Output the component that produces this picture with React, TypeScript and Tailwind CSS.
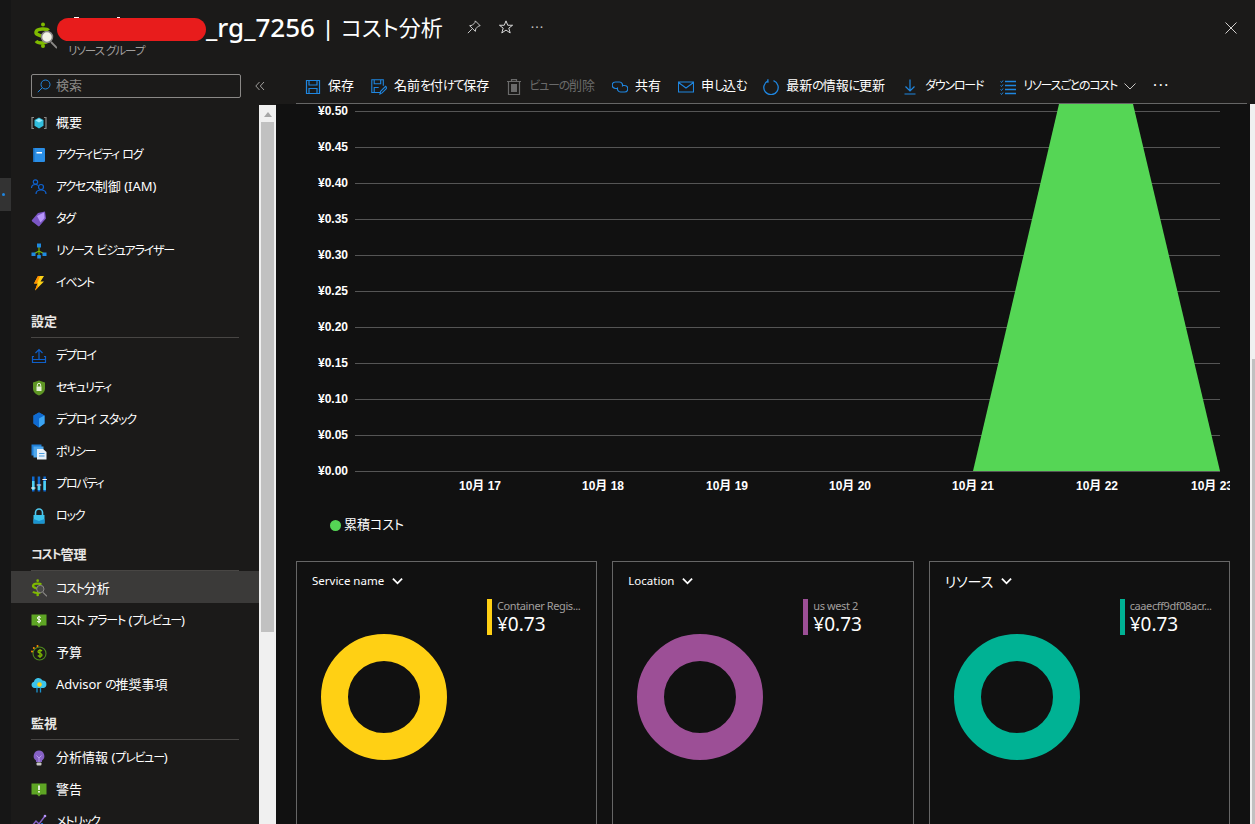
import React from 'react';

type IconProps = { className?: string; lens?: string };

function Jp({ text }: { text: string }) {
  return (
    <>
      {text.split(/([\u3040-\u30ff]+)/).map((part, i) =>
        i % 2 === 1 ? (
          <span key={i} className="text-[12px] tracking-[-1.2px]">{part}</span>
        ) : (
          <span key={i}>{part}</span>
        ),
      )}
    </>
  );
}

// --- side menu icons ---
const CostIcon = ({ className, lens = '#f2f2e6' }: IconProps) => (
  <svg viewBox="0 0 24 30" className={className}>
    <circle cx="10" cy="2.5" r="2" fill="#7fba00" />
    <circle cx="10" cy="24" r="2" fill="#7fba00" />
    <path d="M15.5 8.5C14 6.5 4 6 3 10c-1 4.500 12 3.500 11.500 8C14 22 5 21.500 3 19" fill="none" stroke="#7fba00" strokeWidth="3.400" />
    <path d="M18 20l6 6" stroke="#8a8886" strokeWidth="1.800" />
    <circle cx="14" cy="15" r="5.500" fill={lens} stroke="#8a8886" strokeWidth="1.500" />
  </svg>
);

const icons: Record<string, React.ReactNode> = {
  overview: (
    <svg viewBox="0 0 16 16" className="w-4 h-4">
      <path d="M3 2.500H1v11h2M13 2.500h2v11h-2" fill="none" stroke="#8a8886" strokeWidth="1.200" />
      <path d="M8 2.500l4.500 2.600v5.600L8 13.500l-4.500-2.800V5.100z" fill="#32bedd" />
      <path d="M8 3.500l3.500 2L8 7.500l-3.500-2z" fill="#9cebff" />
    </svg>
  ),
  log: (
    <svg viewBox="0 0 16 16" className="w-4 h-4">
      <rect x="2" y="1" width="12" height="14" rx="1" fill="#2a8ee6" />
      <rect x="2" y="1" width="1.500" height="14" fill="#1b6fbd" />
      <rect x="5.500" y="5" width="5.500" height="1.500" fill="#fff" />
    </svg>
  ),
  iam: (
    <svg viewBox="0 0 16 16" className="w-4 h-4" fill="none" stroke="#0f62d0" strokeWidth="1.200">
      <circle cx="4.500" cy="3" r="2.200" />
      <path d="M.5 9c0-2.500 1.500-3.500 4-3.500 1 0 2 .3 2.500 1" />
      <circle cx="10" cy="8" r="2.500" />
      <path d="M5 15c0-2.500 2-4 5-4s5 1.500 5 4" />
    </svg>
  ),
  tag: (
    <svg viewBox="0 0 16 16" className="w-4 h-4">
      <path d="M1 9l6-7 7-1.500 1 7-6.500 7.500a1 1 0 0 1-1.500 0L1.200 10.500A1 1 0 0 1 1 9z" fill="#7b56c4" />
      <path d="M6 5l7-3.500.5 5.500-4 4.500z" fill="#b796f9" />
    </svg>
  ),
  visualizer: (
    <svg viewBox="0 0 16 16" className="w-4 h-4">
      <path d="M8 3v10M8 8L2.500 11M8 8l5.500 3" stroke="#7fba00" strokeWidth="1.100" fill="none" />
      <rect x="6" y="0.500" width="4" height="4" fill="#1f8ae0" />
      <rect x="0.500" y="9.500" width="4" height="3.500" fill="#1f8ae0" />
      <rect x="11.500" y="9.500" width="4" height="3.500" fill="#1f8ae0" />
      <rect x="6.200" y="12" width="3.600" height="3.500" fill="#1f8ae0" />
    </svg>
  ),
  event: (
    <svg viewBox="0 0 16 16" className="w-4 h-4">
      <path d="M7 1h6L9.500 6.500H13L4 15.500l2.500-7H3z" fill="#fcd116" />
      <path d="M7 1h2L6 8.500H3zM6.500 8.500L4 15.500l3-3z" fill="#ff8c00" />
    </svg>
  ),
  deploy: (
    <svg viewBox="0 0 16 16" className="w-4 h-4" fill="none" stroke="#0f5fc9" strokeWidth="1.200">
      <path d="M8 11V1.500M4.500 5L8 1.500 11.500 5" />
      <path d="M3 8.500H1.500v6h13v-6H13M1.500 11.500h13" />
    </svg>
  ),
  security: (
    <svg viewBox="0 0 16 16" className="w-4 h-4">
      <path d="M8 .5l6 2v6c0 3.500-3 6-6 7-3-1-6-3.500-6-7v-6z" fill="#5e9624" />
      <rect x="5.500" y="6.500" width="5" height="4.500" fill="#e6f2d8" />
      <path d="M6.300 6.500V5a1.700 1.700 0 0 1 3.400 0v1.500" fill="none" stroke="#e6f2d8" />
    </svg>
  ),
  stack: (
    <svg viewBox="0 0 16 16" className="w-4 h-4">
      <path d="M8 .5l5.500 3v8L8 15.500l-5.500-4v-8z" fill="#1b7de0" />
      <path d="M8 .5l5.500 3L8 6.500v9l-5.500-4v-8z" fill="#0f6ad0" />
      <path d="M8 6.500l5.500-3v8L8 15.500z" fill="#3ba4f2" />
    </svg>
  ),
  policy: (
    <svg viewBox="0 0 16 16" className="w-4 h-4">
      <rect x="0.500" y="0.500" width="10" height="11" fill="#1f7fd8" />
      <rect x="2.500" y="2.500" width="10" height="11" fill="#50a8ec" />
      <path d="M6 5h6l3.500 3v7.500H6z" fill="#e8f1fa" />
      <path d="M8 9.500h5.500M8 12h5.500" stroke="#4a9de0" strokeWidth="1" />
    </svg>
  ),
  properties: (
    <svg viewBox="0 0 16 16" className="w-4 h-4">
      <rect x="1" y="0.500" width="2.500" height="15" fill="#0f6ad0" />
      <rect x="6.700" y="0.500" width="2.500" height="15" fill="#0f6ad0" />
      <rect x="12.400" y="0.500" width="2.500" height="15" fill="#0f6ad0" />
      <rect x="1" y="5" width="2.500" height="9" fill="#50d2f0" />
      <rect x="6.700" y="10" width="2.500" height="4" fill="#50d2f0" />
      <rect x="12.400" y="5" width="2.500" height="9" fill="#50d2f0" />
      <path d="M0 12h4.500M5.700 9h4.500M11.400 3.500h4.500" stroke="#fff" />
    </svg>
  ),
  lock: (
    <svg viewBox="0 0 16 16" className="w-4 h-4">
      <path d="M4.500 8V4.500a3.500 3.500 0 0 1 7 0V8" fill="none" stroke="#50c8ee" strokeWidth="1.600" />
      <rect x="2.500" y="7" width="11" height="8.500" fill="#3cc4ec" />
      <path d="M2.500 11l5.500 2 5.500-2v4.500h-11z" fill="#1b93d0" />
    </svg>
  ),
  cost: <CostIcon className="w-4 h-5" lens="#4a4a48" />,
  alert: (
    <svg viewBox="0 0 16 16" className="w-4 h-4">
      <path d="M0.500 1.500h15v11H10L8 14.500 6 12.500H0.500z" fill="#5ea524" />
      <path d="M9.800 4.500C9 3.500 6.500 3.500 6.300 5c-.2 1.500 3.500 1.200 3.400 3-.1 1.300-2.700 1.300-3.500.3M8 2.800v7.500" fill="none" stroke="#fff" strokeWidth="1" />
    </svg>
  ),
  budget: (
    <svg viewBox="0 0 16 16" className="w-4 h-4">
      <circle cx="8.500" cy="8.500" r="6.500" fill="none" stroke="#4f8a1f" strokeWidth="1.100" />
      <path d="M11 6C10 4.800 7 5 7 6.700c0 1.800 4 1.300 4 3.200 0 1.700-3 1.800-4.200.6M9 4v9" fill="none" stroke="#7fba00" strokeWidth="1.300" />
      <circle cx="6.500" cy="1" r="1" fill="#ff8c00" />
      <circle cx="2.800" cy="3" r="1" fill="#ff8c00" />
      <circle cx="1" cy="6.500" r="1" fill="#ff8c00" />
    </svg>
  ),
  advisor: (
    <svg viewBox="0 0 16 16" className="w-4 h-4">
      <path d="M3.500 11A3.200 3.200 0 0 1 3 4.700 4.500 4.500 0 0 1 11.500 3.500 3.800 3.800 0 0 1 12.500 11z" fill="#3cc4ec" />
      <path d="M6 10.500v5M9.500 10.500v5" stroke="#1b93d0" strokeWidth="1.300" />
      <circle cx="8.500" cy="7.500" r="2.300" fill="#fcd116" />
    </svg>
  ),
  insights: (
    <svg viewBox="0 0 16 16" className="w-4 h-4">
      <path d="M8 .5a5.500 5.500 0 0 1 3 10V12H5v-1.500A5.500 5.500 0 0 1 8 .5z" fill="#8661c5" />
      <path d="M5.500 5.500L8 8l2.500-2.500M8 8v4" fill="none" stroke="#c5a9f5" strokeWidth=".8" />
      <rect x="5.500" y="12.500" width="5" height="3" rx="1" fill="#c8c6c4" />
    </svg>
  ),
  warning: (
    <svg viewBox="0 0 16 16" className="w-4 h-4">
      <path d="M0.500 1.500h15v11H10L8 14.500 6 12.500H0.500z" fill="#5ea524" />
      <rect x="7.200" y="3.500" width="1.600" height="4.500" fill="#fff" />
      <rect x="7.200" y="9" width="1.600" height="1.600" fill="#fff" />
    </svg>
  ),
  metrics: (
    <svg viewBox="0 0 16 16" className="w-4 h-4">
      <path d="M1 12l4-5 3 3 6-8" fill="none" stroke="#8661c5" strokeWidth="1.500" />
      <circle cx="14" cy="2" r="1.300" fill="#b796f9" />
      <rect x="2" y="13" width="2" height="3" fill="#1f6fd0" />
      <rect x="6" y="11.500" width="2" height="4.500" fill="#1f6fd0" />
      <rect x="10" y="9" width="2" height="7" fill="#1f6fd0" />
    </svg>
  ),
};

type NavEntry = { icon: string; label: string; active?: boolean };
type NavGroup = { title?: string; items: NavEntry[] };

const navGroups: NavGroup[] = [
  {
    items: [
      { icon: 'overview', label: '概要' },
      { icon: 'log', label: 'アクティビティ ログ' },
      { icon: 'iam', label: 'アクセス制御 (IAM)' },
      { icon: 'tag', label: 'タグ' },
      { icon: 'visualizer', label: 'リソース ビジュアライザー' },
      { icon: 'event', label: 'イベント' },
    ],
  },
  {
    title: '設定',
    items: [
      { icon: 'deploy', label: 'デプロイ' },
      { icon: 'security', label: 'セキュリティ' },
      { icon: 'stack', label: 'デプロイ スタック' },
      { icon: 'policy', label: 'ポリシー' },
      { icon: 'properties', label: 'プロパティ' },
      { icon: 'lock', label: 'ロック' },
    ],
  },
  {
    title: 'コスト管理',
    items: [
      { icon: 'cost', label: 'コスト分析', active: true },
      { icon: 'alert', label: 'コスト アラート (プレビュー)' },
      { icon: 'budget', label: '予算' },
      { icon: 'advisor', label: 'Advisor の推奨事項' },
    ],
  },
  {
    title: '監視',
    items: [
      { icon: 'insights', label: '分析情報 (プレビュー)' },
      { icon: 'warning', label: '警告' },
      { icon: 'metrics', label: 'メトリック' },
    ],
  },
];

// --- toolbar ---
const toolbarBlue = '#1f86e0';

const toolIcons: Record<string, React.ReactNode> = {
  save: (
    <svg viewBox="0 0 16 16" className="w-4 h-4" fill="none" stroke={toolbarBlue} strokeWidth="1.200">
      <path d="M1.500 1.500h13v13h-13zM4 1.500v4.500h8V1.500M4 14.500V9.500h8v5" />
    </svg>
  ),
  saveAs: (
    <svg viewBox="0 0 16 16" className="w-4 h-4" fill="none" stroke={toolbarBlue} strokeWidth="1.100">
      <path d="M9 13.500H.8V.8h11.500v6M3.200.8v4h6.500v-4M3.200 13.500V8.500h4.500" />
      <path d="M9 15l.6-2.600 5-5 1.500 1.500-5 5z" />
    </svg>
  ),
  trash: (
    <svg viewBox="0 0 16 16" className="w-4 h-4" fill="none" stroke="#6a6a6a" strokeWidth="1.200">
      <path d="M1 2.500h14M5.500 2.500V.6h5v1.900M2.500 2.500v13h11v-13" />
      <rect x="5" y="5" width="6" height="8" fill="#6a6a6a" stroke="none" />
    </svg>
  ),
  share: (
    <svg viewBox="0 0 16 16" className="w-4 h-4" fill="none" stroke={toolbarBlue} strokeWidth="1.200">
      <path d="M6 9.500H3.500a3.200 3.200 0 0 1 0-6.500h4a3.200 3.200 0 0 1 2.800 4.500" />
      <path d="M10 6.500h2.500a3.200 3.200 0 0 1 0 6.500h-4a3.200 3.200 0 0 1-2.800-4.500" />
    </svg>
  ),
  mail: (
    <svg viewBox="0 0 16 16" className="w-4 h-4" fill="none" stroke={toolbarBlue} strokeWidth="1.100">
      <path d="M.5 3h15v10H.5zM.5 3.500L8 9l7.500-5.500" />
    </svg>
  ),
  refresh: (
    <svg viewBox="0 0 16 16" className="w-4 h-4" fill="none" stroke={toolbarBlue} strokeWidth="1.300">
      <path d="M5 1.900A7.200 7.200 0 1 0 10.500 1.700" />
      <path d="M4.900 .2v3.500" />
    </svg>
  ),
  download: (
    <svg viewBox="0 0 16 16" className="w-4 h-4" fill="none" stroke={toolbarBlue} strokeWidth="1.200">
      <path d="M8 .5v11M3.500 7.500L8 12l4.500-4.500M2.500 15h11" />
    </svg>
  ),
  list: (
    <svg viewBox="0 0 16 16" className="w-4 h-4" fill="none" stroke={toolbarBlue} strokeWidth="1.300">
      <path d="M5 2.500h11M5 6.500h11M5 10.500h11M5 14.500h11" />
      <path d="M0.500 2.500l1 1 1.500-2M0.500 6.500l1 1 1.500-2M0.500 10.500l1 1 1.500-2M0.500 14.500l1 1 1.500-2" strokeWidth="1" />
    </svg>
  ),
};

const toolbarItems = [
  { icon: 'save', label: '保存' },
  { icon: 'saveAs', label: '名前を付けて保存' },
  { icon: 'trash', label: 'ビューの削除', disabled: true },
  { icon: 'share', label: '共有' },
  { icon: 'mail', label: '申し込む' },
  { icon: 'refresh', label: '最新の情報に更新' },
  { icon: 'download', label: 'ダウンロード' },
];

// --- chart data ---
const yTicks = ['¥0.50', '¥0.45', '¥0.40', '¥0.35', '¥0.30', '¥0.25', '¥0.20', '¥0.15', '¥0.10', '¥0.05', '¥0.00'];
const xTicks = [
  { x: 480, label: '10月 17' },
  { x: 603, label: '10月 18' },
  { x: 727, label: '10月 19' },
  { x: 850, label: '10月 20' },
  { x: 973, label: '10月 21' },
  { x: 1097, label: '10月 22' },
  { x: 1212, label: '10月 23' },
];

const cards = [
  { title: 'Service name', name: 'Container Regis...', color: '#ffd014', barClass: 'bg-[#ffd014]', titleClass: 'text-[11.5px]' },
  { title: 'Location', name: 'us west 2', color: '#9c4f96', barClass: 'bg-[#9c4f96]', titleClass: 'text-[11.5px]' },
  { title: 'リソース', name: 'caaecff9df08acr...', color: '#00b294', barClass: 'bg-[#00b294]', titleClass: 'text-[14px]' },
];

function CostChart() {
  return (
    <svg
      viewBox="276 104 954 400"
      className="w-[954px] h-[400px] shrink-0 font-['Liberation_Sans','Noto_Sans_CJK_JP',sans-serif] font-bold text-[12px]"
    >
      {yTicks.map((label, i) => (
        <g key={label}>
          <line x1="355" x2="1220" y1={111.5 + i * 36} y2={111.5 + i * 36} stroke="#555" />
          <text x="348" y={115 + i * 36} textAnchor="end" fill="#fff">{label}</text>
        </g>
      ))}
      <polygon points="973,471 1059,104 1133,104 1220,471" fill="#55d655" />
      {xTicks.map((t) => (
        <text key={t.label} x={t.x} y="490" textAnchor="middle" fill="#fff">{t.label}</text>
      ))}
    </svg>
  );
}

function BreakdownCard({ title, name, color, barClass, titleClass }: (typeof cards)[number]) {
  return (
    <div className="h-[300px] border border-[#666]">
      <div className={`h-[37px] pl-[15px] pt-[1px] flex items-center gap-[8px] text-white ${titleClass}`}>
        <span>{title}</span>
        <svg viewBox="0 0 12 8" className="w-[11px] h-[8px]" fill="none" stroke="#fff" strokeWidth="2">
          <path d="M1 1.500l5 5 5-5" />
        </svg>
      </div>
      <div className="flex pl-[24px]">
        <svg viewBox="0 0 127 127" className="w-[127px] h-[127px] mt-[35px] shrink-0">
          <circle cx="63" cy="63" r="49.500" fill="none" stroke={color} strokeWidth="27" />
        </svg>
        <div className="flex ml-[39px] h-[36px]">
          <div className={`w-[5px] h-[36px] ${barClass}`} />
          <div className="pl-[5px] flex flex-col">
            <span className="text-[11px] tracking-[-0.4px] leading-[13px] text-[#a19f9d] whitespace-nowrap">{name}</span>
            <span className="text-[19px] leading-[24px] text-white">¥0.73</span>
          </div>
        </div>
      </div>
    </div>
  );
}

export default function App() {
  return (
    <div className="h-screen w-full flex overflow-hidden bg-[#1b1a19] text-white font-['Noto_Sans','Noto_Sans_CJK_JP',sans-serif] [font-feature-settings:'palt']">
      {/* Left: portal strip */}
      <div className="w-[11px] shrink-0 bg-[#161616]">
        <div className="mt-[178px] h-[33px] bg-[#333] flex items-center">
          <span className="ml-[2px] w-[3px] h-[3px] rounded-full bg-[#1f86e0]" />
        </div>
      </div>

      <div className="flex-1 flex flex-col min-w-0">
        {/* Blade header */}
        <header className="h-[70px] shrink-0 flex pl-[22px]">
          <CostIcon className="w-[24px] h-[30px] mt-[22px] shrink-0" />
          <div className="flex flex-col pt-[12px]">
            <div className="flex items-center h-[30px]">
              <span className="relative block w-[149px] h-[23px] mt-[5px] rounded-full bg-[#e81c1c]">
                <span className="absolute -top-[1px] left-[17px] w-[5px] h-[1px] bg-white" />
                <span className="absolute -top-[1px] left-[60px] w-[3px] h-[1px] bg-white" />
              </span>
              <span className="text-[26px] leading-[30px] font-medium whitespace-nowrap">_rg_7256</span>
              <span className="text-[22px] leading-[30px] font-medium whitespace-nowrap ml-[7px]">|</span>
              <span className="text-[22px] leading-[30px] whitespace-nowrap ml-[7px]">コスト分析</span>
              <div className="flex items-center gap-[18px] ml-[24px]">
                <svg viewBox="0 0 16 16" className="w-[14px] h-[14px]" fill="none" stroke="#e0e0e0" strokeWidth="1">
                  <path d="M9.500 1L15 6.500l-2 .5-3 3 -.5 3L3 6.500l3-.5 3-3zM5.500 10.500L1 15" />
                </svg>
                <svg viewBox="0 0 16 16" className="w-[14px] h-[14px]" fill="none" stroke="#e0e0e0" strokeWidth="1.100">
                  <path d="M8 1l2 5h5.500l-4.300 3.300 1.600 5.500L8 11.500l-4.800 3.300 1.600-5.500L.5 6H6z" />
                </svg>
                <span className="text-[13px] leading-none tracking-[1px] text-[#c8c6c4]">···</span>
              </div>
            </div>
            <span className="pl-[11px] mt-[1px] text-[11.5px] tracking-[-1px] leading-[16px] text-[#a19f9d]">リソース グループ</span>
          </div>
          <svg viewBox="0 0 12 12" className="w-[12px] h-[12px] ml-auto mr-[18px] mt-[22px]" fill="none" stroke="#d2d0ce" strokeWidth="1">
            <path d="M.5.5l11 11M11.500.5l-11 11" />
          </svg>
        </header>

        <div className="flex-1 flex min-h-0">
          {/* Left: resource menu */}
          <aside className="w-[265px] shrink-0 flex flex-col min-h-0">
            <div className="h-[34px] shrink-0 flex items-start pl-[20px] pt-[4px]">
              <div className="w-[210px] h-[24px] border border-[#8a8886] rounded-[2px] flex items-center pl-[5px] gap-[5px]">
                <svg viewBox="0 0 14 14" className="w-[14px] h-[14px]" fill="none" stroke="#1f86e0" strokeWidth="1">
                  <circle cx="8.500" cy="5.500" r="4.500" />
                  <path d="M5.200 8.800L.8 13.200" />
                </svg>
                <span className="text-[13px] leading-none -mt-[2px] text-[#8a8886]">検索</span>
              </div>
              <svg viewBox="0 0 10 10" className="w-[10px] h-[10px] ml-[14px] mt-[7px]" fill="none" stroke="#a19f9d" strokeWidth="1">
                <path d="M4.500 1L.8 5l3.700 4M9 1L5.300 5 9 9" />
              </svg>
            </div>
            <div className="flex-1 flex min-h-0">
              <nav className="w-[248px] shrink-0 pt-[1px] overflow-hidden">
                {navGroups.map((group) => (
                  <div key={group.items[0].label}>
                    {group.title && (
                      <div className="h-[41px] mx-[20px] flex items-end border-b border-[#484644] text-[13px] font-bold leading-[27px] text-[#e8e6e4]">
                        <span className="pb-[2px]"><Jp text={group.title} /></span>
                      </div>
                    )}
                    {group.items.map((item) => (
                      <div
                        key={item.label}
                        className={`h-8 pl-[20px] pt-[4px] flex items-center gap-[9px] text-[13px] whitespace-nowrap ${item.active ? 'bg-[#3b3a39]' : ''}`}
                      >
                        <span className="w-4 h-5 shrink-0 flex items-center justify-center">{icons[item.icon]}</span>
                        <span><Jp text={item.label} /></span>
                      </div>
                    ))}
                  </div>
                ))}
              </nav>
              <div className="w-[17px] shrink-0 mt-[1px] bg-[#f0f0f0] flex flex-col items-center">
                <svg viewBox="0 0 8 5" className="w-[8px] h-[5px] mt-[7px] shrink-0">
                  <path d="M4 0l4 5H0z" fill="#a6a6a6" />
                </svg>
                <div className="w-[13px] h-[510px] mt-[5px] bg-[#c1c1c1]" />
              </div>
            </div>
          </aside>

          {/* Right: toolbar + content */}
          <div className="flex-1 min-w-0 flex flex-col">
            <div className="h-[34px] shrink-0 ml-[20px] mr-[8px] pl-[9px] border-b border-[#666] flex items-center gap-[17px] text-[13px] whitespace-nowrap">
              {toolbarItems.map((item) => (
                <div key={item.label} className={`flex items-center gap-[7px] ${item.disabled ? 'text-[#6a6a6a]' : 'text-white'}`}>
                  {toolIcons[item.icon]}
                  <span className="-mt-[2px]"><Jp text={item.label} /></span>
                </div>
              ))}
              <div className="flex items-center gap-[7px]">
                {toolIcons.list}
                <span className="-mt-[2px]"><Jp text="リソースごとのコスト" /></span>
                <svg viewBox="0 0 12 7" className="w-[12px] h-[7px]" fill="none" stroke="#c8c6c4" strokeWidth="1">
                  <path d="M.5.5L6 6 11.500.5" />
                </svg>
              </div>
              <span className="text-[15px] leading-none tracking-[1.500px] -mt-[4px]">···</span>
            </div>
            <div className="flex-1 flex min-h-0">
              <main className="flex-1 min-w-0 bg-[#111] overflow-hidden">
                <CostChart />
                <div className="h-[20px] mt-[11px] mb-[26px] pl-[54px] flex items-center gap-[3px] text-[13px]">
                  <span className="w-[11px] h-[11px] rounded-full bg-[#55d655]" />
                  <span>累積コスト</span>
                </div>
                <div className="ml-[20px] w-[934px] grid grid-cols-3 gap-[15px]">
                  {cards.map((card) => (
                    <BreakdownCard key={card.title} {...card} />
                  ))}
                </div>
              </main>
              <div className="w-[5px] shrink-0 bg-[#f0f0f0] flex flex-col">
                <div className="mt-[255px] ml-[2px] flex-1 bg-[#c1c1c1]" />
              </div>
            </div>
          </div>
        </div>
      </div>
    </div>
  );
}
